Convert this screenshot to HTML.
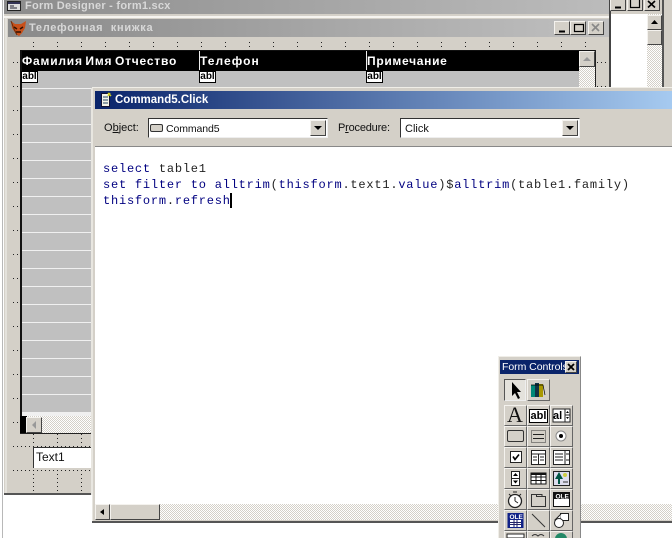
<!DOCTYPE html>
<html><head><meta charset="utf-8"><style>
html,body{margin:0;padding:0;background:#fff}
#p{position:relative;width:672px;height:538px;overflow:hidden;background:#fff;font-family:"Liberation Sans","Noto Sans CJK SC",sans-serif}
#p div,#p span.a,#p svg{position:absolute}
.dith{background:repeating-conic-gradient(#d4d0c8 0 25%,#fff 0 50%) 0 0/2px 2px}
.btn{background:#d4d0c8;border-top:1px solid #f4f2ee;border-left:1px solid #f4f2ee;border-right:1px solid #444;border-bottom:1px solid #444;box-sizing:border-box}
.t{white-space:pre;line-height:1}
.hd{color:#fff;font-weight:bold;font-size:12px;letter-spacing:1.05px;top:55px;white-space:pre;line-height:1}
.abl{background:#fff;border:1px solid #000;box-sizing:border-box;width:17px;height:12px;top:71px;color:#000;font:bold 10px/10px "Liberation Sans",sans-serif;text-align:center;overflow:hidden}
.tb{width:23px;height:21px;background:#d4d0c8;border-top:1px solid #f4f2ee;border-left:1px solid #f4f2ee;border-right:1px solid #666;border-bottom:1px solid #666;box-sizing:border-box}
.tb svg{left:0;top:0}
.code{font-family:"Liberation Mono",monospace;font-size:12px;letter-spacing:.78px;color:#000080;left:103px;white-space:pre;line-height:16px}
.code i{font-style:normal;color:#222}
</style></head><body><div id="p">

<!-- outer window -->
<div style="left:2px;top:0;width:1px;height:538px;background:#b8b8b8"></div>
<div style="left:4px;top:0;width:606px;height:494px;background:#d4d0c8"></div>
<div style="left:4px;top:493px;width:88px;height:2px;background:#555"></div>
<div style="left:4px;top:0;width:606px;height:14px;background:linear-gradient(90deg,#8c8c8c,#bcbcbc)"></div>
<div style="left:609px;top:0;width:2px;height:90px;background:#444"></div>
<div style="left:611px;top:0;width:61px;height:15px;background:#d4d0c8"></div>
<div style="left:611px;top:14px;width:36px;height:76px;background:#fff"></div>
<div style="left:647px;top:14px;width:15px;height:76px" class="dith"></div>
<div style="left:662px;top:0;width:2px;height:90px;background:#555"></div>
<div style="left:664px;top:0;width:8px;height:90px;background:#d4d0c8"></div>
<div class="btn" style="left:647px;top:15px;width:15px;height:15px"></div>
<svg style="left:647px;top:15px" width="15" height="15"><path d="M4 9h7L7.500 5z" fill="#000"/></svg>
<div class="btn" style="left:647px;top:30px;width:15px;height:15px"></div>
<div class="btn" style="left:610px;top:-5px;width:16px;height:16px"></div>
<div class="btn" style="left:627px;top:-5px;width:16px;height:16px"></div>
<div class="btn" style="left:644px;top:-5px;width:16px;height:16px"></div>
<svg style="left:610px;top:0" width="52" height="11"><path d="M5 7.500h6" stroke="#000" stroke-width="2"/><path d="M20.500 0v7.500h9V0" fill="none" stroke="#000" stroke-width="1.200"/><path d="M38 1l7 6.500M45 1l-7 6.500" stroke="#000" stroke-width="1.600"/></svg>
<svg style="left:7px;top:1px" width="15" height="11"><rect x=".5" y=".5" width="13" height="9" fill="#ddd" stroke="#222"/><rect x="1" y="1" width="12" height="2" fill="#335"/><path d="M3 5h4M3 7h7" stroke="#223"/></svg>
<div class="t" style="left:25px;top:0;color:#d8d8d8;font-weight:bold;font-size:11px;letter-spacing:.25px;line-height:12px">Form Designer - form1.scx</div>

<!-- inner form -->
<div style="left:4px;top:16px;width:605px;height:2px;background:#f6f4f0"></div>
<div style="left:5px;top:18px;width:2px;height:475px;background:#e4e2dc"></div>
<div style="left:8px;top:19px;width:601px;height:18px;background:linear-gradient(90deg,#8a8a8a,#c0c0c0)"></div>
<svg style="left:4px;top:0" width="606" height="494"><defs><pattern id="g" patternUnits="userSpaceOnUse" x="5" y="14" width="24" height="24"><g fill="#222"><rect width="1" height="1"/><rect x="4" width="1" height="1"/><rect x="8" width="1" height="1"/><rect x="12" width="1" height="1"/><rect x="16" width="1" height="1"/><rect x="20" width="1" height="1"/><rect y="4" width="1" height="1"/><rect y="8" width="1" height="1"/><rect y="12" width="1" height="1"/><rect y="16" width="1" height="1"/><rect y="20" width="1" height="1"/></g></pattern></defs><rect x="6" y="39" width="598" height="452" fill="url(#g)"/></svg>
<svg style="left:10px;top:20px" width="17" height="17"><path d="M1 1l4 3h6l5-3-1 7-3 5-3 3-3-2-4-6z" fill="#c8501a"/><path d="M4 7l3 2M13 7l-3 2M6 12l5 0" stroke="#301000" stroke-width="1.500"/><path d="M1 1l3 8 3 6" stroke="#6a2a08" fill="none"/></svg>
<div class="t" style="left:29px;top:22px;color:#d8d8d8;font-weight:bold;font-size:11px;letter-spacing:.7px;line-height:12px">Телефонная  книжка</div>
<div class="btn" style="left:554px;top:21px;width:16px;height:14px"></div>
<div class="btn" style="left:570px;top:21px;width:16px;height:14px"></div>
<div class="btn" style="left:588px;top:21px;width:16px;height:14px"></div>
<svg style="left:554px;top:21px" width="50" height="14"><path d="M5 10.500h6" stroke="#000" stroke-width="2"/><path d="M20.500 3.500h9v7h-9z" fill="none" stroke="#000" stroke-width="1.200"/><path d="M38 3l7 7M45 3l-7 7" stroke="#888" stroke-width="1.600"/></svg>

<!-- grid -->
<div style="left:20px;top:50px;width:575px;height:383px;background:#c0c0c0"></div>
<div style="left:20px;top:50px;width:559px;height:21px;background:#000"></div>
<div style="left:20px;top:50px;width:575px;height:1px;background:#111"></div>
<div style="left:20px;top:50px;width:2px;height:383px;background:#111"></div>
<div style="left:199px;top:51px;width:1px;height:19px;background:#eee"></div>
<div style="left:366px;top:51px;width:1px;height:19px;background:#eee"></div>
<div class="hd" style="left:22px;letter-spacing:.8px;word-spacing:-1.500px">Фамилия Имя Отчество</div>
<div class="hd" style="left:200px">Телефон</div>
<div class="hd" style="left:367px;letter-spacing:.7px">Примечание</div>
<div class="abl" style="left:21px">abl</div>
<div class="abl" style="left:199px">abl</div>
<div class="abl" style="left:366px">abl</div>
<div style="left:22px;top:88px;width:71px;height:325px;background:repeating-linear-gradient(180deg,#f0f0f0 0 1px,#c0c0c0 1px 18px)"></div>
<div style="left:22px;top:413px;width:71px;height:3px;background:#f0f0f0"></div>
<div class="dith" style="left:579px;top:66px;width:16px;height:22px"></div>
<div class="btn" style="left:579px;top:51px;width:16px;height:16px"></div>
<svg style="left:579px;top:51px" width="16" height="16"><path d="M4 10h8L8 6z" fill="#999"/></svg>
<div style="left:595px;top:50px;width:1px;height:38px;background:#222"></div>
<div style="left:20px;top:416px;width:7px;height:17px;background:#000"></div>
<div class="dith" style="left:27px;top:416px;width:66px;height:17px"></div>
<div class="btn" style="left:26px;top:417px;width:16px;height:16px"></div>
<svg style="left:26px;top:417px" width="16" height="16"><path d="M10 4v8L6 8z" fill="#999"/></svg>
<div style="left:20px;top:433px;width:73px;height:1px;background:#222"></div>

<!-- Text1 -->
<div style="left:33px;top:447px;width:60px;height:21px;background:#fff;border-left:1px solid #333;border-top:1px solid #333;box-sizing:border-box"></div>
<div class="t" style="left:36px;top:451px;font-size:12px;color:#111">Text1</div>

<!-- code window -->
<div style="left:92px;top:87px;width:580px;height:437px;background:#d4d0c8"></div>
<div style="left:92px;top:87px;width:580px;height:1px;background:#f0eee8"></div>
<div style="left:91px;top:88px;width:2px;height:434px;background:#e8e6e0"></div>
<div style="left:95px;top:91px;width:577px;height:18px;background:linear-gradient(90deg,#0a246a,#a6caf0)"></div>
<svg style="left:100px;top:92px" width="13" height="16"><path d="M1.500 1.500h8v13h-8z" fill="#f4f4e8" stroke="#113"/><path d="M3 5h5M3 8h5M3 11h5" stroke="#246"/><path d="M8 1l3 3M10 1L8 4" stroke="#cc2" stroke-width="1.500"/></svg>
<div class="t" style="left:115px;top:94px;color:#fff;font-weight:bold;font-size:11.500px;line-height:12px">Command5.Click</div>

<div class="t" style="left:104px;top:122px;font-size:11px;color:#111;line-height:12px"><span style="text-decoration:none">O<u>b</u>ject:</span></div>
<div style="left:148px;top:118px;width:180px;height:20px;background:#fff;border:1px solid;border-color:#333 #eee #eee #333;box-sizing:border-box"></div>
<div style="left:150px;top:124px;width:13px;height:8px;background:#d4d0c8;border:1px solid #333;border-radius:2px;box-sizing:border-box"></div>
<div class="t" style="left:166px;top:123px;font-size:10.500px;letter-spacing:-.1px;color:#111;line-height:12px">Command5</div>
<div class="btn" style="left:310px;top:120px;width:16px;height:16px"></div>
<svg style="left:310px;top:120px" width="16" height="16"><path d="M4 6h8l-4 4z" fill="#000"/></svg>
<div class="t" style="left:338px;top:122px;font-size:11px;letter-spacing:-.2px;color:#111;line-height:12px">P<u>r</u>ocedure:</div>
<div style="left:400px;top:118px;width:180px;height:20px;background:#fff;border:1px solid;border-color:#333 #eee #eee #333;box-sizing:border-box"></div>
<div class="t" style="left:405px;top:123px;font-size:11px;color:#111;line-height:12px">Click</div>
<div class="btn" style="left:562px;top:120px;width:16px;height:16px"></div>
<svg style="left:562px;top:120px" width="16" height="16"><path d="M4 6h8l-4 4z" fill="#000"/></svg>

<div style="left:95px;top:146px;width:577px;height:358px;background:#fff"></div>
<div style="left:95px;top:146px;width:577px;height:1px;background:#888"></div>
<div class="code" style="top:161px">select <i>table1</i></div>
<div class="code" style="top:177px">set filter to alltrim<i>(</i>thisform<i>.text1.</i>value<i>)$</i>alltrim<i>(table1.family)</i></div>
<div class="code" style="top:193px">thisform<i>.</i>refresh</div>
<div style="left:230px;top:193px;width:2px;height:15px;background:#000"></div>

<div class="dith" style="left:95px;top:504px;width:577px;height:16px"></div>
<div class="btn" style="left:95px;top:504px;width:15px;height:16px"></div>
<svg style="left:95px;top:504px" width="15" height="16"><path d="M9 5v6L5 8z" fill="#000"/></svg>
<div class="btn" style="left:110px;top:504px;width:50px;height:16px"></div>
<div style="left:92px;top:521px;width:580px;height:2px;background:#555"></div>
<div style="left:92px;top:523px;width:580px;height:15px;background:#fff"></div>
<div style="left:4px;top:495px;width:88px;height:43px;background:#fff"></div>

<!-- form controls -->
<div style="left:498px;top:356px;width:83px;height:182px;background:#d4d0c8;border-left:1px solid #f0eee8;border-top:1px solid #f0eee8;border-right:1px solid #888;box-sizing:border-box"></div>
<div style="left:500px;top:360px;width:79px;height:14px;background:#0a246a;overflow:hidden"><span class="a t" style="left:2px;top:1px;color:#fff;font-size:10.500px;letter-spacing:-.05px;line-height:12px">Form Controls</span></div>
<div class="btn" style="left:565px;top:361px;width:12px;height:12px"></div>
<svg style="left:565px;top:361px" width="12" height="12"><path d="M3 3l6 6M9 3l-6 6" stroke="#000" stroke-width="1.800"/></svg>

<div style="left:504px;top:379px;width:22px;height:22px;box-sizing:border-box;border:1px solid;border-color:#555 #eee #eee #555;background:#e4e2dc"></div>
<svg style="left:504px;top:379px" width="22" height="22"><path d="M8 3v14l3-3 3 6 2-1-3-6h4z" fill="#000"/></svg>
<div class="tb" style="left:527px;top:379px;height:22px"></div>
<svg style="left:527px;top:379px" width="23" height="22"><rect x="4" y="6" width="4" height="12" fill="#087"/><rect x="8" y="4" width="4" height="14" fill="#134"/><rect x="12" y="5" width="4" height="13" fill="#a90"/><path d="M4 6h12l2 10" stroke="#000" fill="none" stroke-width=".7"/></svg>

<div class="tb" style="left:504px;top:405px"></div><div class="t" style="left:505px;top:404px;width:20px;text-align:center;font:22px/22px 'Liberation Serif',serif;color:#111">A</div>
<div class="tb" style="left:527px;top:405px"></div><div class="abl" style="left:529px;top:409px;width:19px;height:14px;line-height:12px;font-size:11px;border-width:1.500px">abl</div>
<div class="tb" style="left:550px;top:405px"></div><svg style="left:550px;top:405px" width="23" height="21"><rect x="3" y="4" width="17" height="13" fill="#fff" stroke="#222"/><path d="M15 4v13M15 10h5" stroke="#222"/><path d="M16 8l1.500-2 1.500 2zM16 12h3l-1.500 2z" fill="#000"/></svg><div class="t" style="left:553px;top:410px;font:bold 11px/12px 'Liberation Sans',sans-serif;color:#000">al</div>

<div class="tb" style="left:504px;top:426px"></div><div style="left:507px;top:430px;width:17px;height:12px;background:#d4d0c8;border:1.500px solid #333;border-radius:2px;box-sizing:border-box"></div>
<div class="tb" style="left:527px;top:426px"></div><svg style="left:527px;top:426px" width="23" height="21"><rect x="4.500" y="4.500" width="14" height="12" fill="none" stroke="#333" stroke-dasharray="1 1"/><path d="M6 8.500h11M6 12.500h11" stroke="#222"/></svg>
<div class="tb" style="left:550px;top:426px"></div><svg style="left:550px;top:426px" width="23" height="21"><circle cx="11" cy="10" r="5" fill="#fff" stroke="#888"/><circle cx="11" cy="10" r="2" fill="#000"/></svg>

<div class="tb" style="left:504px;top:447px"></div><svg style="left:504px;top:447px" width="23" height="21"><rect x="6.500" y="4.500" width="11" height="11" fill="#fff" stroke="#222"/><path d="M9 9.500l2 3 4-5" stroke="#000" stroke-width="1.600" fill="none"/></svg>
<div class="tb" style="left:527px;top:447px"></div><svg style="left:527px;top:447px" width="23" height="21"><rect x="4.500" y="3.500" width="14" height="14" fill="#fff" stroke="#222"/><path d="M4 7h15M11.500 7v11M6 10h4M6 13h4M13 10h4M13 13h4" stroke="#222"/></svg>
<div class="tb" style="left:550px;top:447px"></div><svg style="left:550px;top:447px" width="23" height="21"><rect x="3.500" y="3.500" width="16" height="14" fill="#fff" stroke="#222"/><path d="M15 4v13M5 7h8M5 10h8M5 13h8M16 7h3M16 13h3" stroke="#222"/></svg>

<div class="tb" style="left:504px;top:468px"></div><svg style="left:504px;top:468px" width="23" height="21"><rect x="7.500" y="3.500" width="8" height="14" fill="#fff" stroke="#222"/><path d="M8 10.500h7" stroke="#222"/><path d="M9 8l2.500-3 2.500 3zM9 12.500h5l-2.500 3z" fill="#000"/></svg>
<div class="tb" style="left:527px;top:468px"></div><svg style="left:527px;top:468px" width="23" height="21"><path d="M4 5h15v11H4zM4 9h15M4 12.500h15M9 5v11M14 5v11" fill="#fff" stroke="#111"/><rect x="4" y="5" width="15" height="2" fill="#111"/></svg>
<div class="tb" style="left:550px;top:468px"></div><svg style="left:550px;top:468px" width="23" height="21"><rect x="3.500" y="3.500" width="16" height="14" fill="#dde" stroke="#222"/><path d="M9 4l-4 7h3v5h2v-5h3z" fill="#054"/><circle cx="15" cy="7" r="2" fill="#cc4"/><path d="M13 14h5" stroke="#333"/></svg>

<div class="tb" style="left:504px;top:489px"></div><svg style="left:504px;top:489px" width="23" height="21"><circle cx="11" cy="12" r="6.500" fill="#fff" stroke="#222" stroke-width="1.300"/><path d="M11 12V8M11 12l3 2M9 3h4M5 5l2 2M17 5l-2 2" stroke="#222"/></svg>
<div class="tb" style="left:527px;top:489px"></div><svg style="left:527px;top:489px" width="23" height="21"><path d="M4.500 5.500h5v2h9v10h-14z" fill="#d4d0c8" stroke="#333"/><path d="M10 5.500h5v2" fill="none" stroke="#333"/></svg>
<div class="tb" style="left:550px;top:489px"></div><svg style="left:550px;top:489px" width="23" height="21"><rect x="3.500" y="3.500" width="16" height="14" fill="#fff" stroke="#111"/><rect x="3" y="3" width="17" height="7" fill="#111"/><text x="5.500" y="9.500" font-family="Liberation Sans" font-size="6.500" font-weight="bold" fill="#fff">OLE</text></svg>

<div class="tb" style="left:504px;top:510px"></div><svg style="left:504px;top:510px" width="23" height="21"><rect x="3.500" y="3" width="16" height="15" fill="#112288"/><text x="5.500" y="9" font-family="Liberation Sans" font-size="6.500" font-weight="bold" fill="#fff">OLE</text><rect x="6" y="10" width="11" height="7" fill="#fff"/><path d="M6 12.500h11M6 14.500h11M10 10v7M13 10v7" stroke="#226"/></svg>
<div class="tb" style="left:527px;top:510px"></div><svg style="left:527px;top:510px" width="23" height="21"><path d="M5 4l13 13" stroke="#333"/></svg>
<div class="tb" style="left:550px;top:510px"></div><svg style="left:550px;top:510px" width="23" height="21"><rect x="10.500" y="3.500" width="8" height="7" fill="#fff" stroke="#222"/><path d="M11 4l-6 6 5 2" fill="#fff" stroke="#222"/><circle cx="9" cy="13" r="4.500" fill="#fff" stroke="#222"/></svg>

<div class="tb" style="left:504px;top:531px"></div><svg style="left:504px;top:531px" width="23" height="7"><rect x="3" y="3" width="17" height="4" fill="#fff" stroke="#222"/></svg>
<div class="tb" style="left:527px;top:531px"></div><svg style="left:527px;top:531px" width="23" height="7"><path d="M5 5q3-3 6 0q3-3 6 0" stroke="#333" fill="none"/></svg>
<div class="tb" style="left:550px;top:531px"></div><svg style="left:550px;top:531px" width="23" height="7"><circle cx="11" cy="8" r="6" fill="#286"/></svg>

</div></body></html>
